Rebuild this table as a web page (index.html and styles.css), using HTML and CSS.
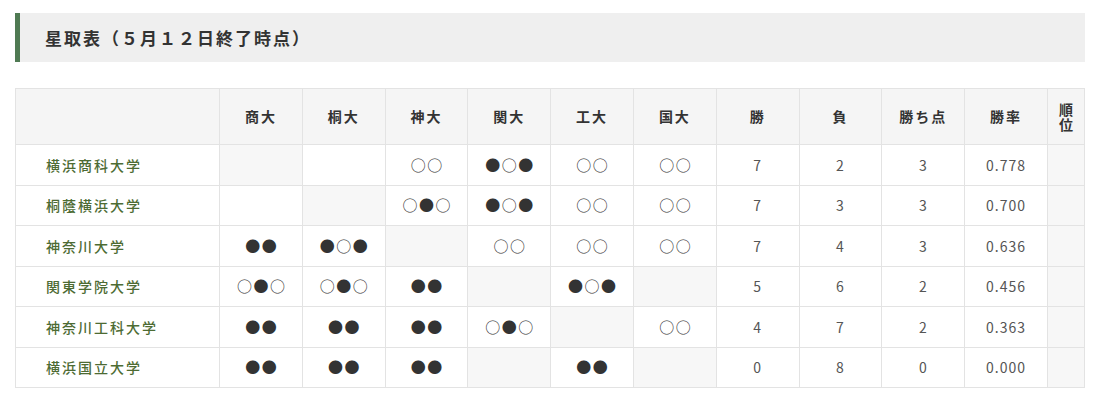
FILE: index.html
```html
<!DOCTYPE html>
<html lang="ja">
<head>
<meta charset="utf-8">
<link rel="stylesheet" href="styles.css">
</head>
<body>
<div class="page">
  <h2 class="title">星取表（５月１２日終了時点）</h2>
  <table class="standings">
    <colgroup>
      <col class="c-team"><col class="c"><col class="c"><col class="c"><col class="c"><col class="c"><col class="c"><col class="c"><col class="c"><col class="c"><col class="c"><col class="c-rank">
    </colgroup>
    <thead>
      <tr>
        <th></th><th>商大</th><th>桐大</th><th>神大</th><th>関大</th><th>工大</th><th>国大</th><th>勝</th><th>負</th><th>勝ち点</th><th>勝率</th><th class="rank">順位</th>
      </tr>
    </thead>
    <tbody>
      <tr>
        <td class="team">横浜商科大学</td><td class="self"></td><td></td><td class="mk">○○</td><td class="mk">●○●</td><td class="mk">○○</td><td class="mk">○○</td><td>7</td><td>2</td><td>3</td><td>0.778</td><td class="rank"></td>
      </tr>
      <tr>
        <td class="team">桐蔭横浜大学</td><td></td><td class="self"></td><td class="mk">○●○</td><td class="mk">●○●</td><td class="mk">○○</td><td class="mk">○○</td><td>7</td><td>3</td><td>3</td><td>0.700</td><td class="rank"></td>
      </tr>
      <tr>
        <td class="team">神奈川大学</td><td class="mk">●●</td><td class="mk">●○●</td><td class="self"></td><td class="mk">○○</td><td class="mk">○○</td><td class="mk">○○</td><td>7</td><td>4</td><td>3</td><td>0.636</td><td class="rank"></td>
      </tr>
      <tr>
        <td class="team">関東学院大学</td><td class="mk">○●○</td><td class="mk">○●○</td><td class="mk">●●</td><td class="self"></td><td class="mk">●○●</td><td class="self"></td><td>5</td><td>6</td><td>2</td><td>0.456</td><td class="rank"></td>
      </tr>
      <tr>
        <td class="team">神奈川工科大学</td><td class="mk">●●</td><td class="mk">●●</td><td class="mk">●●</td><td class="mk">○●○</td><td class="self"></td><td class="mk">○○</td><td>4</td><td>7</td><td>2</td><td>0.363</td><td class="rank"></td>
      </tr>
      <tr>
        <td class="team">横浜国立大学</td><td class="mk">●●</td><td class="mk">●●</td><td class="mk">●●</td><td class="self"></td><td class="mk">●●</td><td class="self"></td><td>0</td><td>8</td><td>0</td><td>0.000</td><td class="rank"></td>
      </tr>
    </tbody>
  </table>
</div>
</body>
</html>
```
FILE: styles.css
```css
html, body {
  margin: 0;
  padding: 0;
  background: #ffffff;
}
body {
  font-family: "Noto Sans CJK JP", "Noto Sans", sans-serif;
  color: #333333;
}
.page {
  padding: 13px 13px 0 15px;
}
.title {
  margin: 0;
  height: 49px;
  box-sizing: border-box;
  background: #efefef;
  border-left: 5px solid #4f7a53;
  padding-left: 25px;
  display: flex;
  align-items: center;
  font-size: 17px;
  font-weight: bold;
  letter-spacing: 2px;
  color: #333333;
}
.standings {
  margin-top: 26px;
  width: 1069px;
  border-collapse: collapse;
  table-layout: fixed;
  font-size: 14px;
}
.c-team { width: 204px; }
.c { width: 82.8px; }
.c-rank { width: 37px; }
.standings th,
.standings td {
  border: 1px solid #e3e3e3;
  text-align: center;
  vertical-align: middle;
  padding: 0 4px;
}
.standings th {
  background: #f5f5f5;
  height: 55px;
  font-weight: bold;
  letter-spacing: 2px;
  line-height: 15px;
  color: #333333;
}
.standings th.rank {
  padding: 0 6px;
  letter-spacing: 0;
}
.standings td {
  height: 40.5px;
  box-sizing: border-box;
  color: #555555;
  letter-spacing: 1px;
  line-height: 20px;
}
.standings td.team {
  text-align: left;
  padding-left: 30px;
  color: #4d6b33;
  font-weight: 500;
  letter-spacing: 2px;
}
.standings td.mk {
  color: #333333;
  font-size: 15px;
  letter-spacing: 1.5px;
  padding-left: 5.5px;
}
.standings td.self,
.standings td.rank {
  background: #f7f7f7;
}
```
